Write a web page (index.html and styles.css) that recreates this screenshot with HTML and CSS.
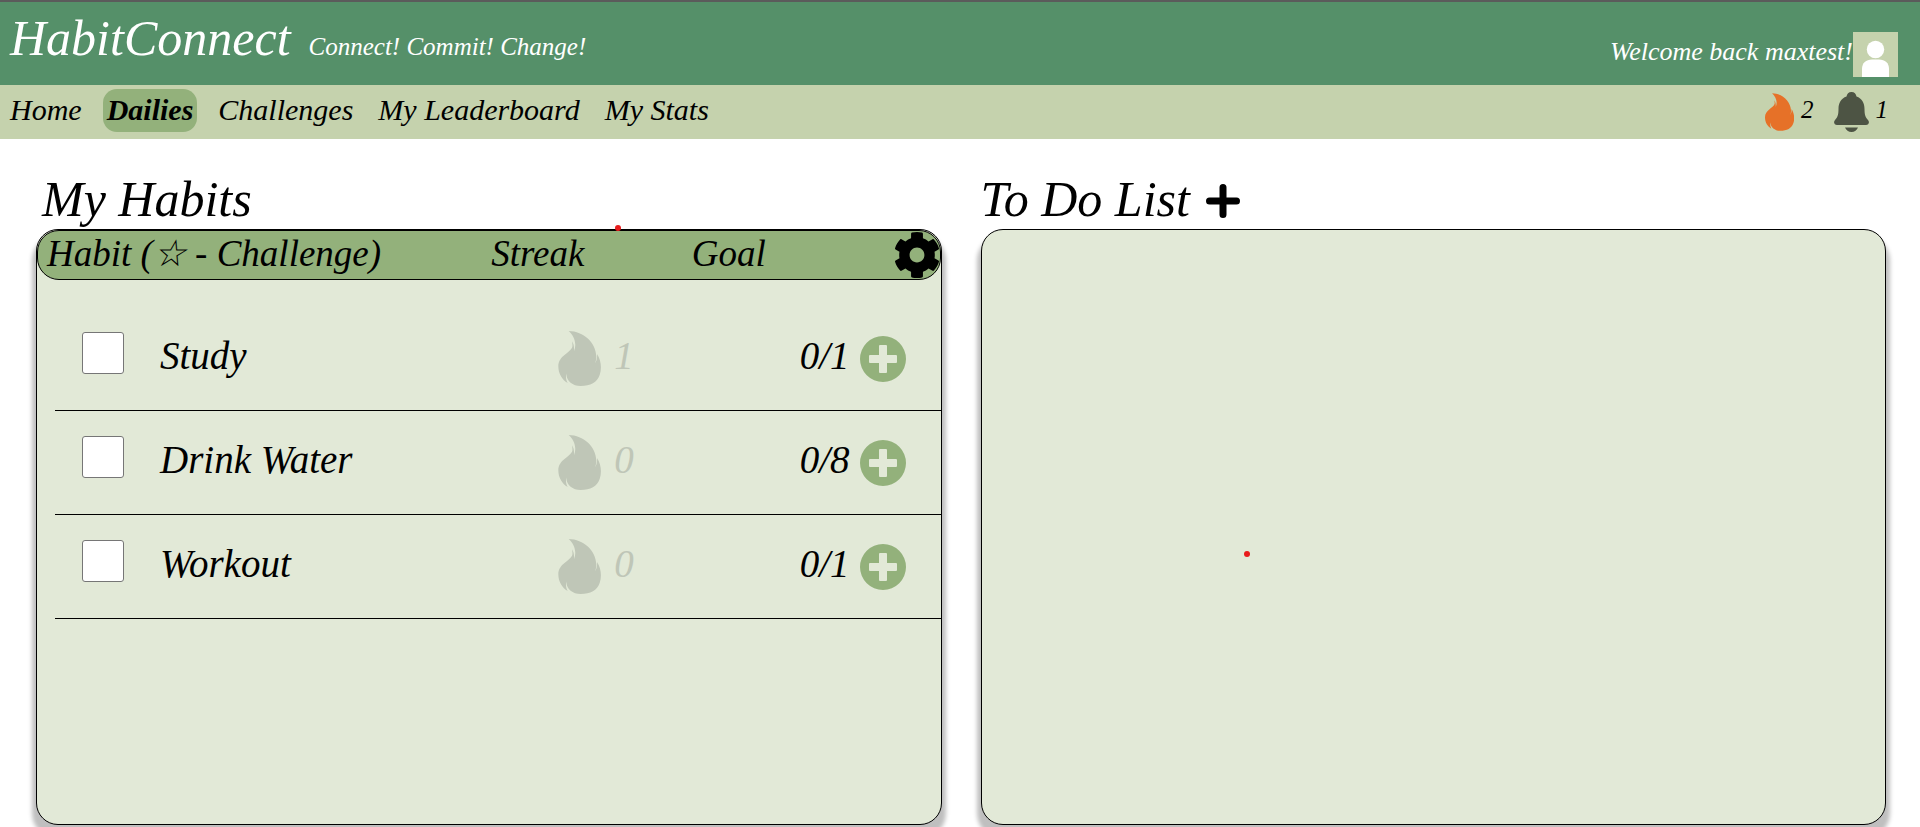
FILE: index.html
```html
<!DOCTYPE html>
<html lang="en">
<head>
<meta charset="utf-8">
<title>HabitConnect</title>
<link rel="stylesheet" href="styles.css">
</head>
<body>
<svg class="sprite" aria-hidden="true">
  <symbol id="flame" viewBox="0 0 127 165">
    <path d="M31 0C76 1 112 34 114 76C114 84 113 90 110 97C116 88 117 79 116 69C128 86 131 112 124 132C117 154 96 165 67 165C41 165 21 145 25 127C21 136 23 147 28 156C12 147 0 129 0 106C0 74 36 66 42 48C43 42 42 37 41 31C46 39 48 48 47 61C57 35 46 14 31 0Z"/>
  </symbol>
  <symbol id="plus-circle" viewBox="0 0 46 46">
    <path fill-rule="evenodd" d="M23 0a23 23 0 1 1 0 46a23 23 0 0 1 0-46ZM20 9a1 1 0 0 0-1 1v9h-9a1 1 0 0 0-1 1v6a1 1 0 0 0 1 1h9v9a1 1 0 0 0 1 1h6a1 1 0 0 0 1-1v-9h9a1 1 0 0 0 1-1v-6a1 1 0 0 0-1-1h-9v-9a1 1 0 0 0-1-1Z"/>
  </symbol>
</svg>

<header class="banner">
  <h1 class="brand">HabitConnect</h1>
  <p class="tagline">Connect! Commit! Change!</p>
  <div class="account">
    <span class="welcome">Welcome back maxtest!</span>
    <svg class="avatar" viewBox="0 0 45 45" role="img" aria-label="Profile">
      <path fill="#c5d2ad" d="M0 0h45v45H0z"/>
      <circle cx="22.5" cy="17.5" r="8.7" fill="#fff"/>
      <path fill="#fff" d="M9 45V37C9 31 13 27.5 19 27.5H26C32 27.5 36 31 36 37V45Z"/>
    </svg>
  </div>
</header>

<nav class="menu">
  <a class="link" href="#home">Home</a>
  <a class="link current" href="#dailies">Dailies</a>
  <a class="link" href="#challenges">Challenges</a>
  <a class="link" href="#leaderboard">My Leaderboard</a>
  <a class="link" href="#stats">My Stats</a>
  <div class="counters">
    <span class="counter"><svg class="streak-icon"><use href="#flame"/></svg><span class="count">2</span></span>
    <span class="counter"><svg class="bell-icon" viewBox="0 0 35 40"><path d="M17.500 0C20.500 0 22 2 22.500 4.500C28 6.500 30.500 11 30.500 17C30.500 23 31.500 25.500 34 28C36 30.500 34.500 33 32 33H3C.5 33-1 30.500 1 28C3.500 25.500 4.500 23 4.500 17C4.500 11 7 6.500 12.500 4.500C13 2 14.500 0 17.500 0ZM11 35.500H24C23 38 20.500 40 17.500 40C14.500 40 12 38 11 35.500Z"/></svg><span class="count">1</span></span>
  </div>
</nav>

<main class="boards">
  <section class="board">
    <h2 class="title">My Habits</h2>
    <div class="panel">
      <table class="habits">
        <thead>
          <tr class="columns">
            <th>Habit (☆ - Challenge)</th>
            <th>Streak</th>
            <th>Goal</th>
            <th class="tools">
              <button class="icon-button" aria-label="Settings">
                <svg class="gear-icon" viewBox="16 8 480 496"><path d="M487.400 315.700l-42.600-24.600c4.300-23.200 4.300-47 0-70.200l42.600-24.600c4.900-2.800 7.100-8.600 5.500-14-11.100-35.600-30-67.800-54.700-94.600-3.800-4.100-10-5.100-14.800-2.300L380.800 110c-17.900-15.400-38.500-27.300-60.800-35.100V25.800c0-5.600-3.900-10.500-9.400-11.700-36.700-8.200-74.300-7.800-109.200 0-5.500 1.200-9.400 6.100-9.400 11.700V75c-22.200 7.900-42.800 19.800-60.800 35.100L88.700 85.500c-4.900-2.800-11-1.900-14.800 2.300-24.700 26.700-43.600 58.900-54.700 94.600-1.700 5.400.6 11.200 5.500 14L67.300 221c-4.300 23.200-4.300 47 0 70.200l-42.600 24.600c-4.900 2.800-7.100 8.600-5.500 14 11.100 35.600 30 67.800 54.700 94.600 3.800 4.100 10 5.100 14.800 2.300l42.600-24.600c17.900 15.400 38.500 27.300 60.800 35.100v49.200c0 5.600 3.900 10.500 9.400 11.700 36.700 8.200 74.300 7.800 109.200 0 5.500-1.200 9.400-6.100 9.400-11.700v-49.200c22.200-7.900 42.800-19.800 60.800-35.100l42.600 24.600c4.900 2.800 11 1.900 14.800-2.300 24.700-26.700 43.600-58.900 54.700-94.600 1.500-5.500-.7-11.300-5.600-14.100zM256 336c-44.100 0-80-35.900-80-80s35.900-80 80-80 80 35.900 80 80-35.900 80-80 80z"/></svg>
              </button>
            </th>
          </tr>
        </thead>
        <tbody class="rows">
          <tr class="habit">
            <td class="check"><input class="box" type="checkbox" id="study"></td>
            <td><label class="text" for="study">Study</label></td>
            <td class="streak"><svg class="flame-icon"><use href="#flame"/></svg><span class="text">1</span></td>
            <td class="goal"><span class="text">0/1</span><button class="icon-button" aria-label="Add Study"><svg class="add-icon"><use href="#plus-circle"/></svg></button></td>
          </tr>
          <tr class="habit">
            <td class="check"><input class="box" type="checkbox" id="water"></td>
            <td><label class="text" for="water">Drink Water</label></td>
            <td class="streak"><svg class="flame-icon"><use href="#flame"/></svg><span class="text">0</span></td>
            <td class="goal"><span class="text">0/8</span><button class="icon-button" aria-label="Add Drink Water"><svg class="add-icon"><use href="#plus-circle"/></svg></button></td>
          </tr>
          <tr class="habit">
            <td class="check"><input class="box" type="checkbox" id="workout"></td>
            <td><label class="text" for="workout">Workout</label></td>
            <td class="streak"><svg class="flame-icon"><use href="#flame"/></svg><span class="text">0</span></td>
            <td class="goal"><span class="text">0/1</span><button class="icon-button" aria-label="Add Workout"><svg class="add-icon"><use href="#plus-circle"/></svg></button></td>
          </tr>
        </tbody>
      </table>
      <span class="dot dot-edge"></span>
    </div>
  </section>

  <section class="board">
    <h2 class="title todo">To Do List
      <button class="icon-button add-todo" aria-label="Add to do"><svg class="plus-icon" viewBox="0 0 34 34"><path fill="none" stroke="#000" stroke-width="7" stroke-linecap="round" d="M17 3.500V30.500M3.500 17H30.500"/></svg></button>
    </h2>
    <div class="panel"><span class="dot dot-middle"></span></div>
  </section>
</main>
</body>
</html>
```
FILE: styles.css
```css
* {
  box-sizing: border-box;
}

body {
  margin: 0;
  height: 100vh;
  display: flex;
  flex-direction: column;
  overflow: hidden;
  background: #fff;
  color: #000;
  font-family: "Liberation Serif", serif;
  font-style: italic;
}

svg {
  display: block;
  flex: none;
}

.sprite {
  position: absolute;
  width: 0;
  height: 0;
}

.icon-button {
  display: block;
  padding: 0;
  border: 0;
  background: none;
  cursor: pointer;
}

.banner {
  display: flex;
  align-items: baseline;
  gap: 18px;
  height: 85px;
  padding: 8px 22px 8px 10px;
  border-top: 2px solid #5b5b5b;
  background: #559069;
  color: #fff;
}

.brand,
.title {
  margin: 0;
  font-size: 50px;
  font-weight: 400;
  line-height: 56px;
}

.tagline {
  margin: 0;
  font-size: 25px;
}

.account {
  display: flex;
  align-items: center;
  align-self: flex-end;
  margin-left: auto;
  font-size: 26px;
}

.welcome {
  padding-bottom: 5px;
}

.avatar {
  width: 45px;
  height: 45px;
}

.menu {
  display: flex;
  align-items: center;
  gap: 17px;
  height: 54px;
  padding: 0 32px 0 6px;
  background: #c5d2ad;
}

.link {
  margin-bottom: 4px;
  padding: 0 4px 2px;
  border-radius: 14px;
  color: #000;
  font-size: 30px;
  line-height: 41px;
  text-decoration: none;
}

.current {
  background: #93b17b;
  font-weight: 700;
}

.counters {
  display: flex;
  gap: 20px;
  margin-left: auto;
  font-size: 25px;
}

.counter {
  display: flex;
  align-items: center;
  gap: 7px;
}

.count {
  padding-bottom: 5px;
}

.streak-icon {
  width: 29px;
  height: 38px;
  fill: #e67128;
}

.bell-icon {
  width: 35px;
  height: 40px;
  fill: #4d5444;
}

.boards {
  flex: 1;
  display: grid;
  grid-template-columns: 1fr 1fr;
  gap: 39px;
  padding: 32px 34px 2px 36px;
}

.board {
  display: flex;
  flex-direction: column;
}

.title {
  padding: 0 0 2px 6px;
}

.todo {
  display: flex;
  align-items: center;
  gap: 16px;
  padding-left: 0;
}

.add-todo {
  padding-top: 3px;
}

.plus-icon {
  width: 34px;
  height: 34px;
}

.panel {
  position: relative;
  flex: 1;
  border: 1px solid #000;
  border-radius: 22px;
  background: #e2e9d7;
  box-shadow: 0 10px 4px 4px #bfbfbf;
}

.habits,
.habits thead,
.rows {
  display: block;
}

.columns {
  display: grid;
  grid-template-columns: 445fr 201fr 202fr 46fr;
  align-items: center;
  height: 50px;
  padding-left: 9px;
  border: 1px solid #000;
  border-radius: 22px;
  background: #93b17b;
  font-size: 37px;
  line-height: 44px;
}

.columns th {
  padding: 0 0 2px;
  font-weight: 400;
  text-align: left;
}

.columns .tools {
  display: flex;
  justify-content: flex-end;
  padding: 0;
}

.gear-icon {
  width: 46px;
  height: 46px;
}

.rows {
  padding: 27px 0 0 18px;
}

.habit {
  display: grid;
  grid-template-columns: 78px 398fr 160fr 187fr;
  align-items: center;
  height: 104px;
  padding: 0 35px 0 27px;
  border-bottom: 1px solid #000;
  font-size: 39px;
}

.habit td {
  padding: 0;
}

.habit .check {
  padding-bottom: 12px;
}

.box {
  display: block;
  appearance: none;
  width: 42px;
  height: 42px;
  margin: 0;
  border: 1px solid #767676;
  border-radius: 3px;
  background: #fff;
}

.text {
  display: block;
  padding-bottom: 6px;
}

.streak {
  display: flex;
  align-items: center;
  gap: 13px;
  color: #bfc6b7;
}

.flame-icon {
  width: 43px;
  height: 55px;
  fill: #bfc6b7;
}

.goal {
  display: flex;
  align-items: center;
  justify-content: flex-end;
  gap: 10px;
}

.add-icon {
  width: 46px;
  height: 46px;
  fill: #93b17b;
}

.dot {
  position: absolute;
  width: 6px;
  height: 6px;
  border-radius: 50%;
  background: #e81c1c;
}

.dot-edge {
  top: -5px;
  left: 64%;
}

.dot-middle {
  top: 54%;
  left: 29%;
}
```
